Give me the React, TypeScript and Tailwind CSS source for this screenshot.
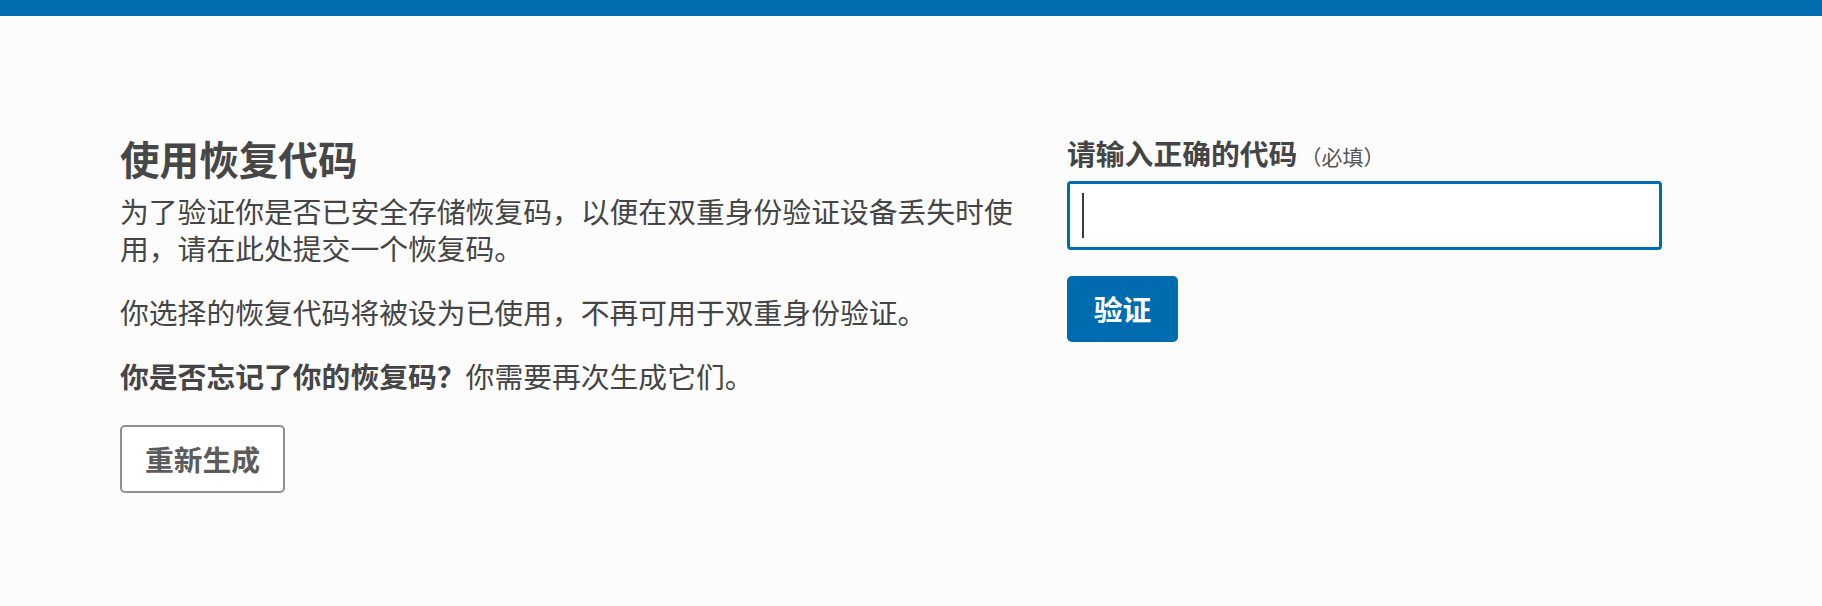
import React from 'react'

const font = { fontFamily: '"Noto Sans CJK SC", "Noto Sans", sans-serif' }

export default function App() {
  return (
    <div className="min-h-[606px] bg-[#fcfcfc] text-[#454545]" style={font}>
      {/* Top bar */}
      <div className="h-4 bg-[#006eb1]" />

      <div className="flex pl-[120px] pt-[118px]">
        {/* Left: explanation */}
        <div className="w-[905px] shrink-0">
          <h1 className="text-[39.6px] font-bold leading-[48px] text-[#474747]">使用恢复代码</h1>
          <p className="mt-[10px] text-[28.8px] leading-[37px]">
            为了验证你是否已安全存储恢复码，以便在双重身份验证设备丢失时使用，请在此处提交一个恢复码。
          </p>
          <p className="mt-[27px] text-[28.8px] leading-[37px]">
            你选择的恢复代码将被设为已使用，不再可用于双重身份验证。
          </p>
          <p className="mt-[27px] text-[28.8px] leading-[37px]">
            <span className="font-bold">你是否忘记了你的恢复码？</span>你需要再次生成它们。
          </p>
          <button className="mt-[31px] flex h-[68px] w-[165px] items-center justify-center rounded-[5px] border-2 border-[#8f8f8f] bg-white text-[28.8px] font-bold text-[#5c5c5c]">
            重新生成
          </button>
        </div>

        {/* Right: form */}
        <div className="ml-[42px] w-[595px] shrink-0">
          <label className="flex h-[37px] items-baseline leading-[37px]">
            <span className="text-[28.8px] font-bold">请输入正确的代码</span>
            <span className="ml-[3px] text-[21px] leading-[37px] text-[#555]">（必填）</span>
          </label>
          <div className="mt-[10px] flex h-[69px] items-center rounded-[4px] border-[3px] border-[#006cb0] bg-white pl-3">
            <span className="h-[45px] w-[2px] bg-[#3a3a3a]" />
          </div>
          <button className="mt-[26px] flex h-[66px] w-[111px] items-center justify-center rounded-[5px] bg-[#006cb0] text-[28.8px] font-bold text-white">
            验证
          </button>
        </div>
      </div>
    </div>
  )
}
